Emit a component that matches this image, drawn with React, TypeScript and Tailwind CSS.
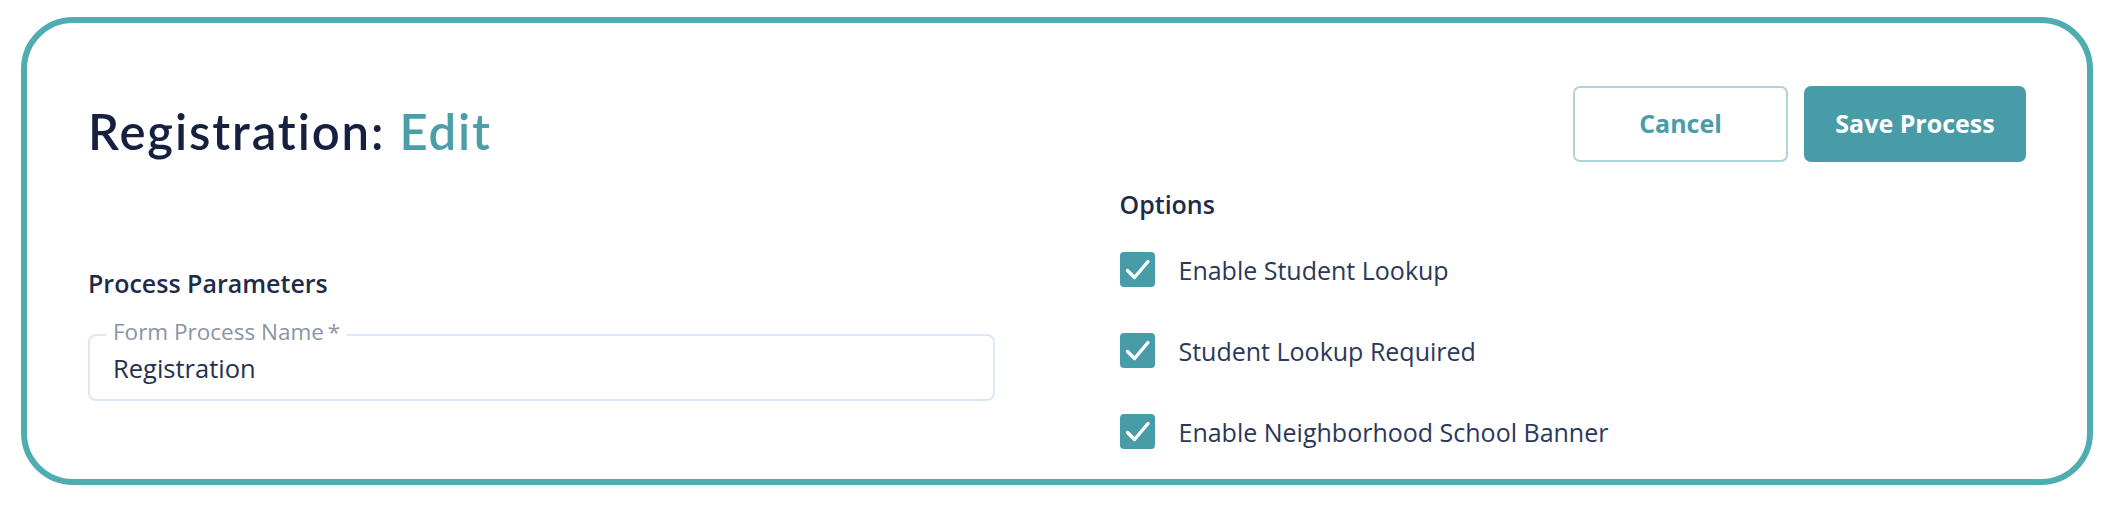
import { useState } from 'react';

const options = [
  'Enable Student Lookup',
  'Student Lookup Required',
  'Enable Neighborhood School Banner',
];

function CheckRow({ label }: { label: string }) {
  const [checked, setChecked] = useState(true);

  return (
    <label className="flex items-center gap-[24px] cursor-pointer">
      <span
        onClick={() => setChecked(!checked)}
        className={`flex items-center justify-center w-[35px] h-[35px] rounded-[4px] ${
          checked ? 'bg-[#489ca8]' : 'border-2 border-[#9aa6b8] bg-white'
        }`}
      >
        {checked && (
          <svg viewBox="0 0 35 35" className="w-[35px] h-[35px]">
            <path
              d="M7.5 18.5 L14.5 25.5 L28 9.5"
              fill="none"
              stroke="white"
              strokeWidth="3.4"
              strokeLinecap="round"
              strokeLinejoin="round"
            />
          </svg>
        )}
      </span>
      <span className="text-[25px] leading-[32px] text-[#2a3859]">{label}</span>
    </label>
  );
}

export default function App() {
  const [name, setName] = useState('Registration');

  return (
    <div className="min-h-screen bg-white pt-[17px] pl-[21px] font-['Open_Sans',sans-serif]">
      <div className="w-[2072px] h-[468px] border-[6px] border-[#4fadb2] rounded-[52px] px-[61px] overflow-hidden">
        {/* header */}
        <div className="flex items-start justify-between pt-[63px]">
          <h1 className="mt-[21px] font-['Lato',sans-serif] font-semibold text-[49px] leading-[48px] tracking-[1.9px] text-[#16213f]">
            Registration: <span className="text-[#4c9ea9]">Edit</span>
          </h1>
          <div className="flex gap-[16px]">
            <button className="w-[215px] h-[76px] rounded-[7px] border-2 border-[#aed6da] bg-white text-[25px] font-bold text-[#4a9ca8]">
              Cancel
            </button>
            <button className="w-[222px] h-[76px] rounded-[7px] bg-[#489ca8] text-[25px] font-bold text-white">
              Save Process
            </button>
          </div>
        </div>

        <div className="grid grid-cols-2 gap-x-[125px] mt-[26px]">
          {/* process parameters */}
          <div>
            <h2 className="mt-[79px] text-[25px] leading-[32px] font-semibold text-[#1e2b4b]">
              Process Parameters
            </h2>
            <div className="relative mt-[35px] h-[67px] border-2 border-[#dde7f7] rounded-[8px]">
              <span className="absolute left-[16px] top-[-18px] bg-white px-[7px] text-[22.5px] leading-[28px] text-[#8a94a7]">
                Form Process Name{'\u2009'}*
              </span>
              <input
                value={name}
                onChange={(e) => setName(e.target.value)}
                className="w-full pl-[23px] pt-[16px] text-[25.5px] leading-[32px] text-[#24324f] outline-none bg-transparent"
              />
            </div>
          </div>

          {/* options */}
          <div>
            <h2 className="text-[25px] leading-[32px] font-semibold text-[#1e2b4b]">Options</h2>
            <div className="flex flex-col gap-[46px] mt-[32px]">
              {options.map((o) => (
                <CheckRow key={o} label={o} />
              ))}
            </div>
          </div>
        </div>
      </div>
    </div>
  );
}
